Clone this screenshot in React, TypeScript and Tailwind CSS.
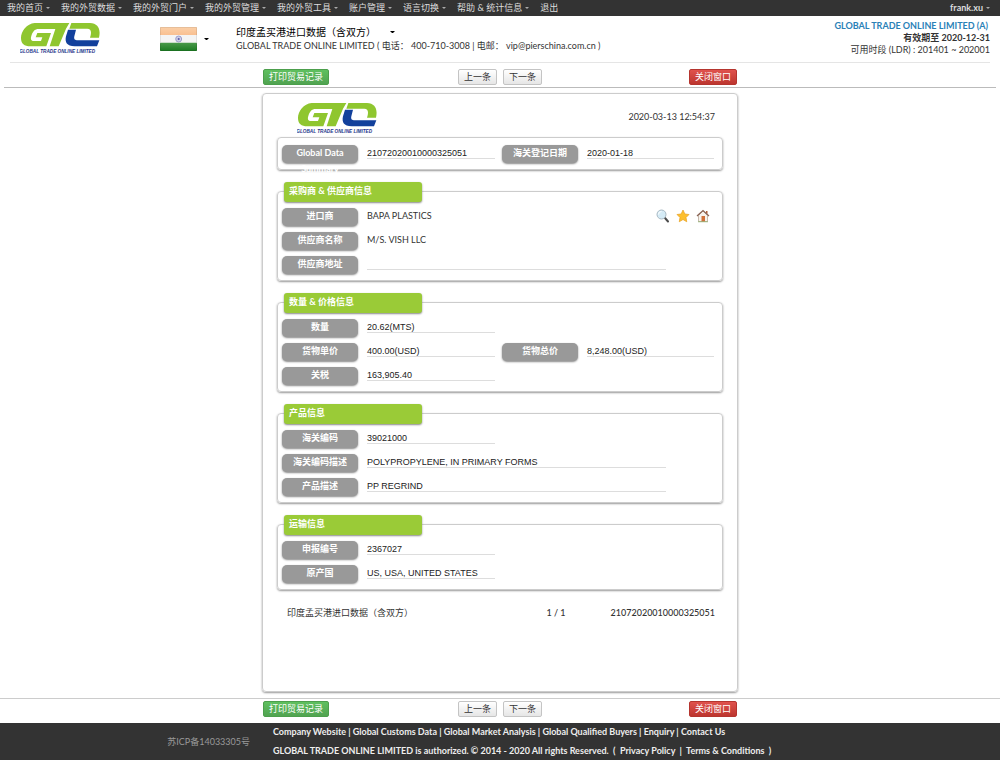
import React from 'react'

const menus = [
  { name: '我的首页', drop: true },
  { name: '我的外贸数据', drop: true },
  { name: '我的外贸门户', drop: true },
  { name: '我的外贸管理', drop: true },
  { name: '我的外贸工具', drop: true },
  { name: '账户管理', drop: true },
  { name: '语言切换', drop: true },
  { name: '帮助 & 统计信息', drop: true },
  { name: '退出', drop: false },
]

const footerLinks = ['Company Website', 'Global Customs Data', 'Global Market Analysis', 'Global Qualified Buyers', 'Enquiry', 'Contact Us']

function Caret({ className }: { className: string }) {
  return (
    <svg className={className} viewBox="0 0 6 3" fill="currentColor" aria-hidden="true">
      <path d="M0 0h6L3 3z" />
    </svg>
  )
}

function Logo() {
  return (
    <svg className="h-8 w-20" viewBox="0 0 240 96" role="img" aria-label="Global Trade Online Limited">
      <path fill="#8fc62f" d="M148 3H44C20 5 3 28 3 48c0 17 10 25 28 25h48l14-40H52l-5 13h20l-4 11H42c-9 0-11-6-8-15 4-13 10-21 22-21h50L89 73h27L138 20z" />
      <path fill="#8fc62f" d="M154 3h56c24 1 33 18 27 44h-27c6-17 3-27-8-27h-54z" />
      <path fill="#12409c" d="M144 23h24l-5 20c-2 9 2 12 10 12h65l-7 18h-67c-24 0-30-13-26-30z" />
      <text x="-2" y="92" fill="#27368c" fontSize="14" fontWeight="700" fontStyle="italic" fontFamily="Liberation Sans, sans-serif">GLOBAL TRADE  ONLINE LIMITED</text>
    </svg>
  )
}

function Flag() {
  return (
    <svg className="h-6 w-[37px]" viewBox="0 0 111 72" role="img" aria-label="India">
      <defs>
        <linearGradient id="saffron" x1="0" y1="0" x2="0" y2="1">
          <stop offset="0" stopColor="#fbd0a8" />
          <stop offset="1" stopColor="#f9bf90" />
        </linearGradient>
        <linearGradient id="green" x1="0" y1="0" x2="0" y2="1">
          <stop offset="0" stopColor="#4a9a4a" />
          <stop offset="1" stopColor="#1c7a22" />
        </linearGradient>
      </defs>
      <rect width="111" height="25" rx="2" fill="url(#saffron)" />
      <rect y="24" width="111" height="24" fill="#f4f4f4" />
      <rect y="47" width="111" height="25" rx="2" fill="url(#green)" />
      <circle cx="56" cy="36" r="9" fill="#dcdcee" stroke="#7a7ab8" strokeWidth="2" />
      <path d="M56 28v16M48 36h16M50 30l12 12M62 30L50 42" stroke="#9a9acb" strokeWidth="1" />
      <circle cx="56" cy="36" r="3" fill="#5c5ca8" />
      <rect x="1" y="1" width="109" height="70" rx="2" fill="none" stroke="#000" strokeOpacity=".15" strokeWidth="2" />
    </svg>
  )
}

function SearchIcon() {
  return (
    <svg className="size-3.5" viewBox="0 0 28 28" aria-hidden="true">
      <path d="M18 18l6 7" stroke="#4b4b4b" strokeWidth="4" strokeLinecap="round" />
      <circle cx="11" cy="11" r="9" fill="#d5ebf6" stroke="#a9b9c3" strokeWidth="2" />
      <path d="M5 11a6 6 0 0 1 6-6" fill="none" stroke="#fff" strokeWidth="2" />
    </svg>
  )
}

function StarIcon() {
  return (
    <svg className="size-3.5" viewBox="0 0 28 28" aria-hidden="true">
      <path d="M14 2l3.7 8 8.3 1-6 6 1.500 8.500L14 21l-7.500 4.500L8 17l-6-6 8.300-1z" fill="#fdbf2d" stroke="#e8a325" strokeWidth="1.500" strokeLinejoin="round" />
    </svg>
  )
}

function HomeIcon() {
  return (
    <svg className="size-3.5" viewBox="0 0 28 28" aria-hidden="true">
      <path d="M5 13l9-9 9 9v12H5z" fill="#f7f2ec" stroke="#b5a594" strokeWidth="1.500" />
      <path d="M20 4h3v6l-3-3z" fill="#b0603a" />
      <path d="M2 14L14 3l12 11" fill="none" stroke="#8a6354" strokeWidth="2.500" />
      <path d="M11 14h7v11h-7z" fill="#d0713a" />
      <path d="M4 25.500h20" stroke="#8cae6a" strokeWidth="1.500" />
    </svg>
  )
}

function Toolbar() {
  const plain = 'h-4 rounded-xs border border-[#c4c4c4] bg-linear-to-b from-white to-[#e6e6e6] px-[5px] leading-3 text-[#333]'
  return (
    <div className="mx-auto grid w-full max-w-[476px] grid-cols-3 items-center px-px text-[9px]">
      <button className="h-4 justify-self-start rounded-xs border border-[#4c9f4c] bg-linear-to-b from-[#5fc05f] to-[#51a351] px-[5px] leading-3 text-white">打印贸易记录</button>
      <div className="flex justify-center gap-1.5">
        <button className={plain}>上一条</button>
        <button className={plain}>下一条</button>
      </div>
      <button className="h-4 justify-self-end rounded-xs border border-[#b5352f] bg-linear-to-b from-[#e0524d] to-[#bd362f] px-[5px] leading-3 text-white">关闭窗口</button>
    </div>
  )
}

function Pill({ children }: { children: React.ReactNode }) {
  return (
    <dt className="mr-[9px] h-[18px] w-[76px] shrink-0 rounded-[5px] bg-[#999] text-center font-bold leading-4 text-white shadow-[0_1px_2px_#888]">
      {children}
    </dt>
  )
}

type Item = { label: string; value: string }

function Row({ label, value, wide, second }: Item & { wide?: boolean; second?: Item }) {
  const line = 'h-3.5 border-b border-[#ddd] font-[Liberation_Sans,sans-serif] leading-4 text-[#222]'
  return (
    <dl className="flex items-start">
      <Pill>{label}</Pill>
      <dd className={wide ? `${line} w-[299px]` : `${line} w-32`}>{value}</dd>
      {second && (
        <>
          <div className="w-[7px]" />
          <Pill>{second.label}</Pill>
          <dd className={`${line} flex-1`}>{second.value}</dd>
        </>
      )}
    </dl>
  )
}

function Section({ title, children }: { title: string; children: React.ReactNode }) {
  return (
    <section className="mt-[21px] flex flex-col gap-1.5 rounded-sm border border-[#ccc] pr-2 pb-1.5 pl-1 shadow-[0_1px_2px_#999]">
      <h2 className="-mt-[10px] ml-0.5 h-5 w-[138px] rounded-[3px] bg-[#9acb37] pl-[5px] font-bold leading-[17px] text-white shadow-[0_1px_2px_#888]">{title}</h2>
      {children}
    </section>
  )
}

function Record() {
  return (
    <main className="mx-auto w-full max-w-[476px] rounded-sm border border-[#ccc] px-3.5 pt-2 pb-[70px] text-[9px] shadow-[0_1px_2px_#999]">
      <div className="flex h-[35px] items-start justify-between pr-2 pl-5">
        <Logo />
        <time className="mt-[7px] leading-4">2020-03-13 12:54:37</time>
      </div>
      <section className="h-[33px] rounded-sm border border-[#ccc] pt-[7px] pr-2 pl-1 shadow-[0_1px_2px_#999]">
        <Row label="Global Data Summary" value="21072020010000325051" second={{ label: '海关登记日期', value: '2020-01-18' }} />
      </section>

      <Section title="采购商 & 供应商信息">
        <dl className="flex items-start">
          <Pill>进口商</Pill>
          <dd className="flex-1 leading-4">BAPA PLASTICS</dd>
          <dd className="flex gap-1.5 pt-px pr-1">
            <button aria-label="搜索"><SearchIcon /></button>
            <button aria-label="收藏"><StarIcon /></button>
            <button aria-label="主页"><HomeIcon /></button>
          </dd>
        </dl>
        <dl className="flex items-start">
          <Pill>供应商名称</Pill>
          <dd className="leading-4">M/S. VISH LLC</dd>
        </dl>
        <Row label="供应商地址" value="" wide />
      </Section>

      <Section title="数量 & 价格信息">
        <Row label="数量" value="20.62(MTS)" />
        <Row label="货物单价" value="400.00(USD)" second={{ label: '货物总价', value: '8,248.00(USD)' }} />
        <Row label="关税" value="163,905.40" />
      </Section>

      <Section title="产品信息">
        <Row label="海关编码" value="39021000" />
        <Row label="海关编码描述" value="POLYPROPYLENE, IN PRIMARY FORMS" wide />
        <Row label="产品描述" value="PP REGRIND" wide />
      </Section>

      <Section title="运输信息">
        <Row label="申报编号" value="2367027" />
        <Row label="原产国" value="US, USA, UNITED STATES" />
      </Section>

      <div className="mt-[15px] grid grid-cols-3 pr-2 pl-2.5 leading-4">
        <span>印度孟买港进口数据（含双方）</span>
        <span className="pl-[110px] text-center font-medium">1 / 1</span>
        <span className="text-right font-medium">21072020010000325051</span>
      </div>
    </main>
  )
}

export default function App() {
  return (
    <div className="bg-white font-[Lato,Noto_Sans_CJK_SC,sans-serif] text-[9px] text-[#333]">
      <nav className="flex h-4 items-center justify-between bg-[#333] pr-2.5 pl-[7px] text-[#ddd]">
        <div className="flex gap-[11px]">
          {menus.map((m) => (
            <a key={m.name} href="#" className="flex items-center gap-[3px] leading-4">
              {m.name}
              {m.drop && <Caret className="w-1 text-[#aaa]" />}
            </a>
          ))}
        </div>
        <a href="#" className="flex items-center gap-[3px] font-bold leading-4">
          frank.xu
          <Caret className="w-1 text-[#aaa]" />
        </a>
      </nav>

      <header className="mx-2.5 flex h-[47px] items-start border-b border-[#e5e5e5]">
        <div className="w-[150px] pt-1.5 pl-2.5">
          <Logo />
        </div>
        <button className="flex w-[76px] items-center gap-[7px] pt-[11px]" aria-label="国家">
          <Flag />
          <Caret className="w-[5px] text-black" />
        </button>
        <div className="flex-1 pt-2">
          <h1 className="flex items-center gap-3.5 text-[10px] leading-4 text-black">
            印度孟买港进口数据（含双方）
            <Caret className="w-[5px]" />
          </h1>
          <p className="leading-3">GLOBAL TRADE ONLINE LIMITED ( 电话： 400-710-3008 | 电邮： vip@pierschina.com.cn )</p>
        </div>
        <div className="pt-1 text-right leading-3">
          <p className="pr-0.5 font-bold text-[#2a81b7]">GLOBAL TRADE ONLINE LIMITED (A)</p>
          <p className="font-bold">有效期至 2020-12-31</p>
          <p>可用时段 (LDR) : 201401 ~ 202001</p>
        </div>
      </header>

      <div className="mx-1 mb-[5px] border-b border-[#bbb] pt-1.5 pb-0.5">
        <Toolbar />
      </div>
      <Record />
      <div className="mt-1.5 border-t border-[#ccc] pt-0.5 pb-1.5">
        <Toolbar />
      </div>

      <footer className="flex items-center bg-[#333] text-[#eee]">
        <p className="w-[273px] pr-[23px] text-right text-[#999]">苏ICP备14033305号</p>
        <div className="font-bold">
          <p className="leading-[18px]">
            {footerLinks.map((name, i) => (
              <React.Fragment key={name}>
                {i > 0 && ' | '}
                <a href="#">{name}</a>
              </React.Fragment>
            ))}
          </p>
          <p className="leading-5">
            GLOBAL TRADE ONLINE LIMITED is authorized. © 2014 - 2020 All rights Reserved. &nbsp;( &nbsp;<a href="#">Privacy Policy</a> &nbsp;|&nbsp; <a href="#">Terms &amp; Conditions</a> &nbsp;)
          </p>
        </div>
      </footer>
    </div>
  )
}
